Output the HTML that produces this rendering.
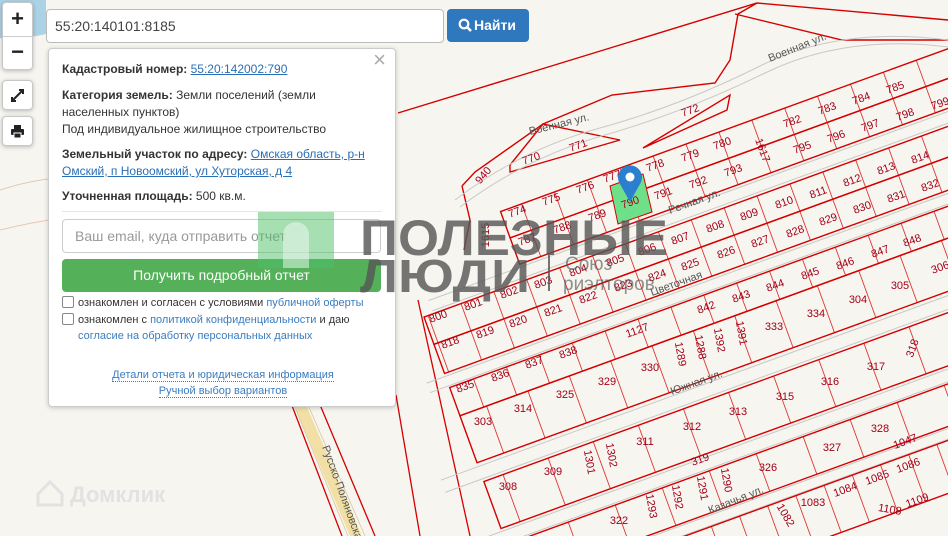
<!DOCTYPE html>
<html><head><meta charset="utf-8"><style>
*{box-sizing:border-box;margin:0;padding:0}
html,body{width:948px;height:536px;overflow:hidden}
body{background:#f7f5ef;font-family:"Liberation Sans",sans-serif;position:relative}
svg.map{position:absolute;left:0;top:0}
.ctl{position:absolute;background:#fff;border:1px solid #c8c8c8;border-radius:4px;box-shadow:0 1px 4px rgba(0,0,0,.25)}
.search{position:absolute;left:46px;top:9px;width:398px;height:34px;background:#fff;border:1px solid #bbb;border-radius:4px;font-size:14px;color:#444;padding:8px 8px}
.btn{position:absolute;left:447px;top:9px;width:82px;height:33px;background:#2f78bd;border-radius:4px;color:#fff;font-size:14px;font-weight:bold;padding:8px 0 0 27px}
.pop{position:absolute;left:48px;top:48px;width:348px;height:359px;background:#fff;border:1px solid #ccc;border-radius:4px;box-shadow:0 1px 5px rgba(0,0,0,.2);font-size:12px;color:#333;line-height:17px;overflow:hidden}
.pop p{position:absolute;left:13px}
.pop b{color:#333}
.pop a{color:#2a6fb5;text-decoration:underline}
.lk{color:#3a7cc0}
.cb{display:inline-block;width:12px;height:12px;border:1px solid #888;border-radius:2px;vertical-align:-2px;margin-right:4px}
</style></head><body>
<svg class="map" width="948" height="536" viewBox="0 0 948 536">
<defs>
<pattern id="c36" width="35" height="400" patternUnits="userSpaceOnUse"><path d="M0 0V400" stroke="#d40000" stroke-width="1.4"/></pattern>
<pattern id="c36b" width="35" height="400" x="14" patternUnits="userSpaceOnUse"><path d="M0 0V400" stroke="#d40000" stroke-width="1.4"/></pattern>
<pattern id="c45" width="44" height="400" x="10" patternUnits="userSpaceOnUse"><path d="M0 0V400" stroke="#d40000" stroke-width="1.4"/></pattern>
<pattern id="c48" width="48" height="400" x="22" patternUnits="userSpaceOnUse"><path d="M0 0V400" stroke="#d40000" stroke-width="1.4"/></pattern>
<pattern id="c48b" width="50" height="400" x="5" patternUnits="userSpaceOnUse"><path d="M0 0V400" stroke="#d40000" stroke-width="1.4"/></pattern>
<pattern id="c32" width="30" height="400" x="8" patternUnits="userSpaceOnUse"><path d="M0 0V400" stroke="#d40000" stroke-width="1.4"/></pattern>
</defs>
<rect width="948" height="536" fill="#f7f5ef"/>
<path d="M0 0H46V34Q20 40 0 38Z" fill="#acd2e6"/>
<path d="M0 190Q60 170 140 178T260 160" stroke="#e7c7b4" fill="none"/>
<path d="M0 230Q80 210 160 214T300 190" stroke="#e7c7b4" fill="none"/>
<path d="M298 400L356 536" stroke="#f1dfa5" stroke-width="11"/>
<path d="M292 400L348 536M305 398L365 536" stroke="#d8c79a" stroke-width=".8"/>
<path d="M286 390L342 536M318 400L375 536" stroke="#d40000" stroke-width="1.3"/>
<path d="M396 395L420 536M418 300L470 536" stroke="#d40000" stroke-width="1.3"/>
<g fill="none" stroke="#d40000" stroke-width="1.4">
<path d="M398 113L757 3L948 20"/>
<path d="M757 3L738 14L730 60L715 83L612 95L600 100L543 124L475 172L462 186"/>
<path d="M735 14L842 40L938 40L948 40"/>
<path d="M643 148L730 95L727 110L643 148Z"/>
<path d="M510 165L543 124L620 140L510 172Z"/>
<path d="M462 186L470 220L464 250"/>
</g>
<path d="M455 200Q520 150 600 128T760 66T948 40" stroke="#c9c9c9" fill="none" stroke-width="1"/>
<path d="M460 207Q525 158 605 135T765 73T948 47" stroke="#c9c9c9" fill="none" stroke-width="1"/>
<g transform="rotate(-20)">
<g stroke="#c8c8c8" stroke-width="1" fill="none">
<path d="M300 429H1100M300 440H1100M270 506H1100M270 516H1100M250 602H1100M250 615H1100M250 671H1100M250 683H1100M250 727H1100M250 737H1100"/>
</g>
<g stroke="#d40000" stroke-width="1.4">
<rect x="398" y="370" width="700" height="28" fill="url(#c36)"/>
<rect x="398" y="398" width="700" height="28" fill="url(#c36)"/>
<rect x="290" y="443" width="810" height="29" fill="url(#c36b)"/>
<rect x="290" y="472" width="810" height="31" fill="url(#c36b)"/>
<rect x="290" y="518" width="810" height="30" fill="url(#c36)"/>
<rect x="290" y="548" width="810" height="50" fill="url(#c45)"/>
<rect x="290" y="618" width="810" height="50" fill="url(#c48)"/>
<rect x="290" y="685" width="810" height="40" fill="url(#c48b)"/>
<rect x="290" y="738" width="810" height="50" fill="url(#c32)"/>
</g>
</g>
<polygon points="610,186 643,174 652,212 618,224" fill="#6fe08a" stroke="#d40000" stroke-width="1"/>
<g font-size="11" fill="#a3001a" text-anchor="middle" font-family="Liberation Sans,sans-serif">
<text x="690" y="114" transform="rotate(-20 690 110)">772</text>
<text x="578" y="149" transform="rotate(-20 578 145)">771</text>
<text x="531" y="162" transform="rotate(-20 531 158)">770</text>
<text x="483" y="179" transform="rotate(-50 483 175)">940</text>
<text x="655" y="169" transform="rotate(-20 655 165)">778</text>
<text x="690" y="159" transform="rotate(-20 690 155)">779</text>
<text x="722" y="147" transform="rotate(-20 722 143)">780</text>
<text x="792" y="125" transform="rotate(-20 792 121)">782</text>
<text x="827" y="112" transform="rotate(-20 827 108)">783</text>
<text x="861" y="102" transform="rotate(-20 861 98)">784</text>
<text x="895" y="91" transform="rotate(-20 895 87)">785</text>
<text x="940" y="107" transform="rotate(-20 940 103)">799</text>
<text x="585" y="191" transform="rotate(-20 585 187)">776</text>
<text x="551" y="203" transform="rotate(-20 551 199)">775</text>
<text x="517" y="215" transform="rotate(-20 517 211)">774</text>
<text x="612" y="180" transform="rotate(-20 612 176)">777</text>
<text x="663" y="197" transform="rotate(-20 663 193)">791</text>
<text x="698" y="186" transform="rotate(-20 698 182)">792</text>
<text x="733" y="174" transform="rotate(-20 733 170)">793</text>
<text x="763" y="154" transform="rotate(70 763 150)">1617</text>
<text x="802" y="151" transform="rotate(-20 802 147)">795</text>
<text x="836" y="140" transform="rotate(-20 836 136)">796</text>
<text x="870" y="129" transform="rotate(-20 870 125)">797</text>
<text x="905" y="118" transform="rotate(-20 905 114)">798</text>
<text x="630" y="206" transform="rotate(-20 630 202)">790</text>
<text x="597" y="219" transform="rotate(-20 597 215)">789</text>
<text x="562" y="231" transform="rotate(-20 562 227)">788</text>
<text x="527" y="243" transform="rotate(-20 527 239)">787</text>
<text x="485" y="239" transform="rotate(-90 485 235)">1615</text>
<text x="749" y="218" transform="rotate(-20 749 214)">809</text>
<text x="784" y="206" transform="rotate(-20 784 202)">810</text>
<text x="818" y="196" transform="rotate(-20 818 192)">811</text>
<text x="852" y="184" transform="rotate(-20 852 180)">812</text>
<text x="886" y="172" transform="rotate(-20 886 168)">813</text>
<text x="920" y="161" transform="rotate(-20 920 157)">814</text>
<text x="715" y="230" transform="rotate(-20 715 226)">808</text>
<text x="680" y="242" transform="rotate(-20 680 238)">807</text>
<text x="647" y="253" transform="rotate(-20 647 249)">806</text>
<text x="615" y="264" transform="rotate(-20 615 260)">805</text>
<text x="578" y="274" transform="rotate(-20 578 270)">804</text>
<text x="543" y="286" transform="rotate(-20 543 282)">803</text>
<text x="509" y="296" transform="rotate(-20 509 292)">802</text>
<text x="473" y="308" transform="rotate(-20 473 304)">801</text>
<text x="438" y="320" transform="rotate(-20 438 316)">800</text>
<text x="795" y="235" transform="rotate(-20 795 231)">828</text>
<text x="828" y="223" transform="rotate(-20 828 219)">829</text>
<text x="862" y="211" transform="rotate(-20 862 207)">830</text>
<text x="896" y="200" transform="rotate(-20 896 196)">831</text>
<text x="930" y="189" transform="rotate(-20 930 185)">832</text>
<text x="726" y="256" transform="rotate(-20 726 252)">826</text>
<text x="760" y="245" transform="rotate(-20 760 241)">827</text>
<text x="690" y="268" transform="rotate(-20 690 264)">825</text>
<text x="657" y="279" transform="rotate(-20 657 275)">824</text>
<text x="623" y="289" transform="rotate(-20 623 285)">823</text>
<text x="588" y="301" transform="rotate(-20 588 297)">822</text>
<text x="553" y="314" transform="rotate(-20 553 310)">821</text>
<text x="518" y="325" transform="rotate(-20 518 321)">820</text>
<text x="485" y="336" transform="rotate(-20 485 332)">819</text>
<text x="450" y="346" transform="rotate(-20 450 342)">818</text>
<text x="845" y="267" transform="rotate(-20 845 263)">846</text>
<text x="880" y="255" transform="rotate(-20 880 251)">847</text>
<text x="912" y="244" transform="rotate(-20 912 240)">848</text>
<text x="940" y="271" transform="rotate(-20 940 267)">306</text>
<text x="900" y="289">305</text>
<text x="858" y="303">304</text>
<text x="810" y="277" transform="rotate(-20 810 273)">845</text>
<text x="775" y="289" transform="rotate(-20 775 285)">844</text>
<text x="741" y="300" transform="rotate(-20 741 296)">843</text>
<text x="706" y="311" transform="rotate(-20 706 307)">842</text>
<text x="637" y="334" transform="rotate(-20 637 330)">1127</text>
<text x="816" y="317">334</text>
<text x="774" y="330">333</text>
<text x="742" y="337" transform="rotate(80 742 333)">1391</text>
<text x="720" y="344" transform="rotate(80 720 340)">1392</text>
<text x="701" y="351" transform="rotate(80 701 347)">1288</text>
<text x="681" y="358" transform="rotate(80 681 354)">1289</text>
<text x="568" y="356" transform="rotate(-20 568 352)">838</text>
<text x="534" y="366" transform="rotate(-20 534 362)">837</text>
<text x="500" y="379" transform="rotate(-20 500 375)">836</text>
<text x="465" y="390" transform="rotate(-20 465 386)">835</text>
<text x="650" y="371">330</text>
<text x="607" y="385">329</text>
<text x="565" y="398">325</text>
<text x="523" y="412">314</text>
<text x="483" y="425">303</text>
<text x="876" y="370">317</text>
<text x="912" y="352" transform="rotate(-70 912 348)">318</text>
<text x="830" y="385">316</text>
<text x="785" y="400">315</text>
<text x="738" y="415">313</text>
<text x="692" y="430">312</text>
<text x="645" y="445">311</text>
<text x="880" y="432">328</text>
<text x="832" y="451">327</text>
<text x="768" y="471">326</text>
<text x="700" y="463" transform="rotate(-20 700 459)">319</text>
<text x="612" y="459" transform="rotate(80 612 455)">1302</text>
<text x="590" y="466" transform="rotate(80 590 462)">1301</text>
<text x="553" y="475">309</text>
<text x="508" y="490">308</text>
<text x="905" y="445" transform="rotate(-20 905 441)">1047</text>
<text x="908" y="469" transform="rotate(-20 908 465)">1086</text>
<text x="877" y="481" transform="rotate(-20 877 477)">1085</text>
<text x="845" y="493" transform="rotate(-20 845 489)">1084</text>
<text x="813" y="506">1083</text>
<text x="786" y="519" transform="rotate(60 786 515)">1082</text>
<text x="917" y="504" transform="rotate(-20 917 500)">1109</text>
<text x="890" y="513" transform="rotate(10 890 509)">1108</text>
<text x="727" y="484" transform="rotate(80 727 480)">1290</text>
<text x="703" y="492" transform="rotate(80 703 488)">1291</text>
<text x="678" y="501" transform="rotate(80 678 497)">1292</text>
<text x="652" y="510" transform="rotate(80 652 506)">1293</text>
<text x="619" y="524">322</text>
</g>
<g font-size="11" fill="#555" font-family="Liberation Sans,sans-serif">
<text x="530" y="135" transform="rotate(-14 530 135)">Военная ул.</text>
<text x="770" y="62" transform="rotate(-22 770 62)">Военная ул.</text>
<text x="670" y="214" transform="rotate(-20 670 214)">Речная ул.</text>
<text x="652" y="296" transform="rotate(-20 652 296)">Цветочная</text>
<text x="672" y="395" transform="rotate(-20 672 395)">Южная ул.</text>
<text x="710" y="514" transform="rotate(-22 710 514)">Казачья ул.</text>
<text x="322" y="447" transform="rotate(70 322 447)">Русско-Поляновская</text>
</g>
<path d="M630 202L620 184A12 12 0 1 1 640 184Z" fill="#2a7fce"/>
<circle cx="630" cy="177" r="4.5" fill="#fff"/>
<g fill="#e2e2e2" font-family="Liberation Sans,sans-serif">
<path d="M38 494L50 482L62 494V505H38Z" fill="none" stroke="#e2e2e2" stroke-width="3"/>
<text x="70" y="502" font-size="22" font-weight="bold">Домклик</text>
</g>
</svg>

<div class="ctl" style="left:2px;top:2px;width:31px;height:68px">
<div style="height:34px;border-bottom:1px solid #ccc;font-size:22px;font-weight:bold;text-align:center;line-height:32px;color:#222">+</div>
<div style="font-size:22px;font-weight:bold;text-align:center;line-height:30px;color:#222">−</div>
</div>
<div class="ctl" style="left:2px;top:80px;width:31px;height:30px">
<svg width="29" height="28"><path d="M9 20L20 9M16 9H20V13M9 16V20H13" stroke="#222" stroke-width="2" fill="none"/></svg>
</div>
<div class="ctl" style="left:2px;top:116px;width:31px;height:30px">
<svg width="29" height="28"><rect x="11" y="8" width="7" height="4" fill="#222"/><rect x="8" y="12" width="13" height="6" rx="1" fill="#222"/><rect x="11" y="16" width="7" height="5" fill="#222" stroke="#fff" stroke-width="1"/></svg>
</div>

<div class="search">55:20:140101:8185</div>
<div class="btn"><svg style="position:absolute;left:11px;top:9px" width="14" height="14"><circle cx="6" cy="6" r="4.3" stroke="#fff" stroke-width="2.2" fill="none"/><path d="M9 9L13 13" stroke="#fff" stroke-width="2.6"/></svg>Найти</div>

<div class="pop">
<div style="position:absolute;right:9px;top:2px;font-size:22px;color:#aaa">×</div>
<p style="top:12px"><b>Кадастровый номер:</b> <a>55:20:142002:790</a></p>
<p style="top:38px"><b>Категория земель:</b> Земли поселений (земли<br>населенных пунктов)<br>Под индивидуальное жилищное строительство</p>
<p style="top:97px"><b>Земельный участок по адресу:</b> <a>Омская область, р-н<br>Омский, п Новоомский, ул Хуторская, д 4</a></p>
<p style="top:139px"><b>Уточненная площадь:</b> 500 кв.м.</p>
<div style="position:absolute;left:13px;right:13px;top:162px;border-top:1px solid #e5e5e5"></div>
<div style="position:absolute;left:13px;top:170px;width:319px;height:34px;border:1px solid #ccc;border-radius:4px;font-size:14px;color:#999;padding:8px 12px">Ваш email, куда отправить отчет</div>
<div style="position:absolute;left:13px;top:210px;width:319px;height:33px;background:#55b05a;border-radius:4px;color:#fff;font-size:14px;text-align:center;line-height:33px">Получить подробный отчет</div>
<p style="top:246px;font-size:11px"><span class="cb"></span>ознакомлен и согласен с условиями <span class="lk">публичной оферты</span></p>
<p style="top:263px;font-size:11px;line-height:16px"><span class="cb"></span>ознакомлен с <span class="lk">политикой конфиденциальности</span> и даю<br><span class="lk" style="margin-left:16px">согласие на обработку персональных данных</span></p>
<p style="top:318px;left:0;width:348px;text-align:center;font-size:11px;line-height:16px"><span class="lk" style="border-bottom:1px dotted #3a7cc0">Детали отчета и юридическая информация</span><br><span class="lk" style="border-bottom:1px dotted #3a7cc0">Ручной выбор вариантов</span></p>
</div>

<svg style="position:absolute;left:0;top:0;pointer-events:none" width="948" height="536">
<rect x="258" y="212" width="76" height="56" fill="#4cbf65" opacity=".5"/>
<path d="M283 268V235A13 13 0 0 1 309 235V268" fill="#f4faf4" opacity=".5"/>
<g fill="#555" opacity=".8" font-family="Liberation Sans,sans-serif">
<text x="360" y="255" font-size="50" font-weight="bold" textLength="308" lengthAdjust="spacingAndGlyphs">ПОЛЕЗНЫЕ</text>
<text x="360" y="292" font-size="46" font-weight="bold" textLength="170" lengthAdjust="spacingAndGlyphs">ЛЮДИ</text>
<rect x="548" y="255" width="2" height="36"/>
<text x="565" y="270" font-size="19" opacity=".8">Союз</text>
<text x="563" y="290" font-size="19" opacity=".8">риэлторов</text>
</g>
</svg>
</body></html>
